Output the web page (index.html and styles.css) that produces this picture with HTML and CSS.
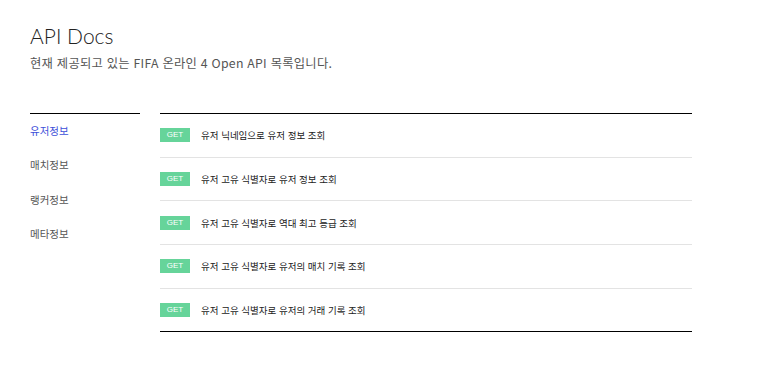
FILE: index.html
```html
<!DOCTYPE html>
<html lang="ko">
<head>
<meta charset="utf-8">
<title>API Docs</title>
<link rel="stylesheet" href="styles.css">
</head>
<body>
<div class="page">
  <header class="head">
    <h1 class="title">API Docs</h1>
    <p class="sub">현재 제공되고 있는 FIFA 온라인 4 Open API 목록입니다.</p>
  </header>
  <div class="content">
    <nav class="side">
      <a class="side-item active">유저정보</a>
      <a class="side-item">매치정보</a>
      <a class="side-item">랭커정보</a>
      <a class="side-item">메타정보</a>
    </nav>
    <ul class="list">
      <li class="row"><span class="badge">GET</span><span class="desc">유저 닉네임으로 유저 정보 조회</span></li>
      <li class="row"><span class="badge">GET</span><span class="desc">유저 고유 식별자로 유저 정보 조회</span></li>
      <li class="row"><span class="badge">GET</span><span class="desc">유저 고유 식별자로 역대 최고 등급 조회</span></li>
      <li class="row"><span class="badge">GET</span><span class="desc">유저 고유 식별자로 유저의 매치 기록 조회</span></li>
      <li class="row last"><span class="badge">GET</span><span class="desc">유저 고유 식별자로 유저의 거래 기록 조회</span></li>
    </ul>
  </div>
</div>
</body>
</html>
```
FILE: styles.css
```css
* { box-sizing: border-box; }
html, body { margin: 0; padding: 0; background: #fff; }
body {
  font-family: "Noto Sans CJK KR", "Noto Sans", sans-serif;
  color: #222;
}
.page {
  padding: 21px 0 0 30px;
  width: 780px;
}
.title {
  margin: 0;
  font-family: "Lato", "Noto Sans", sans-serif;
  font-weight: 300;
  font-size: 21px;
  line-height: 30px;
  color: #222;
}
.sub {
  margin: 4px 0 0;
  font-size: 12.3px;
  line-height: 16px;
  color: #555;
  letter-spacing: 0.25px;
}
.content {
  display: flex;
  margin-top: 42px;
}
.side {
  width: 110px;
  margin-right: 20px;
  border-top: 1px solid #000;
  padding-top: 0;
  display: flex;
  flex-direction: column;
}
.side-item {
  font-size: 10.5px;
  line-height: 34.3px;
  height: 34.3px;
  color: #555;
}
.side-item.active { color: #3d4fd9; }
.list {
  list-style: none;
  margin: 0;
  padding: 0;
  width: 532px;
  border-top: 1px solid #000;
}
.row {
  display: flex;
  align-items: center;
  height: 43.7px;
  border-bottom: 1px solid #e3e3e3;
}
.row.last { border-bottom-color: #000; }
.badge {
  width: 30px;
  height: 14px;
  background: #66d49a;
  color: #fff;
  font-family: "Liberation Sans", Arial, sans-serif;
  font-size: 8px;
  line-height: 14px;
  text-align: center;
  margin-right: 11px;
}
.desc {
  font-size: 9.5px;
  font-weight: 400;
  color: #222;
}
```
